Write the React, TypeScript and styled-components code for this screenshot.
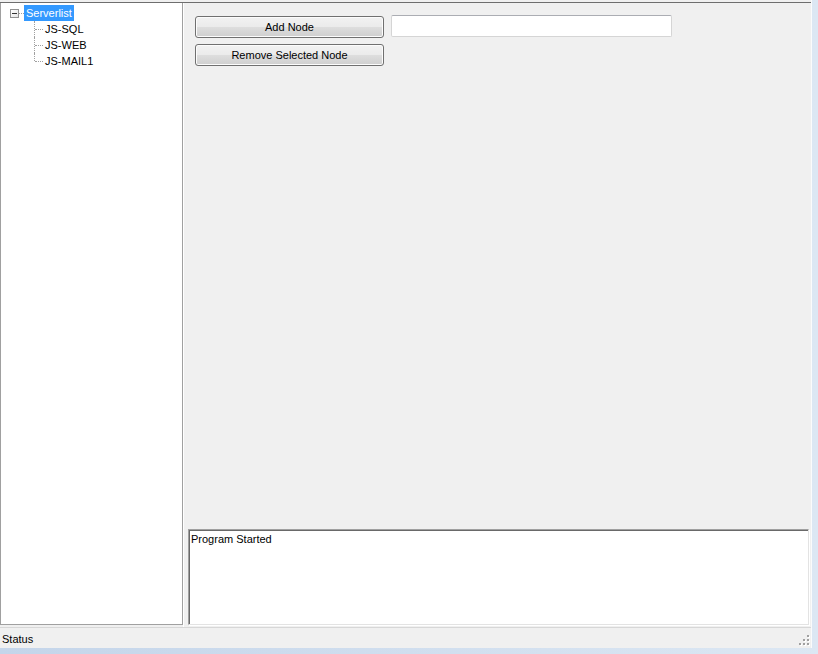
import React from 'react'
import { createGlobalStyle, styled } from 'styled-components'

const GlobalStyle = createGlobalStyle`
  html, body {
    margin: 0;
    padding: 0;
    background: #dce6f2;
  }
  body {
    font-family: "Liberation Sans", Arial, sans-serif;
    font-size: 11px;
    color: #000;
  }
`

const children = ['JS-SQL', 'JS-WEB', 'JS-MAIL1']

const App = () => {
  return (
    <StyledDesktop>
      <GlobalStyle />
      <StyledWindow>
        <StyledSplit>
          <StyledTreePanel>
            <StyledRootRow>
              <StyledExpander />
              <StyledStub />
              <StyledSelectedLabel>Serverlist</StyledSelectedLabel>
            </StyledRootRow>
            {children.map((name, i) => (
              <StyledChildRow key={name}>
                <StyledBranch $last={i === children.length - 1} />
                <StyledLabel>{name}</StyledLabel>
              </StyledChildRow>
            ))}
          </StyledTreePanel>
          <StyledContentPanel>
            <StyledControls>
              <StyledRow>
                <StyledButton>Add Node</StyledButton>
                <StyledTextInput type="text" />
              </StyledRow>
              <StyledRow>
                <StyledButton>Remove Selected Node</StyledButton>
              </StyledRow>
            </StyledControls>
            <StyledLog readOnly value="Program Started" />
          </StyledContentPanel>
        </StyledSplit>
        <StyledStatusBar>
          <StyledStatusText>Status</StyledStatusText>
          <StyledGrip>
            <svg width="12" height="12" viewBox="0 0 12 12">
              {[
                [9, 1],
                [5, 5],
                [9, 5],
                [1, 9],
                [5, 9],
                [9, 9],
              ].map(([x, y]) => (
                <g key={`${x}-${y}`}>
                  <rect x={x + 1} y={y + 1} width="2" height="2" fill="#ffffff" />
                  <rect x={x} y={y} width="2" height="2" fill="#a0a0a0" />
                </g>
              ))}
            </svg>
          </StyledGrip>
        </StyledStatusBar>
      </StyledWindow>
    </StyledDesktop>
  )
}

export default App

const StyledDesktop = styled.div`
  width: 818px;
  height: 654px;
  overflow: hidden;
  background: linear-gradient(90deg, #c4d5ea, #dce7f3);
`

const StyledWindow = styled.div`
  width: 811px;
  height: 648px;
  background: #f0f0f0;
  border-right: 1px solid #fbfbfb;
  display: flex;
  flex-direction: column;
`

const StyledSplit = styled.div`
  flex: 1;
  margin-top: 2px;
  display: flex;
  min-height: 0;
  border-top: 1px solid #6e6e6e;
`

const StyledTreePanel = styled.div`
  width: 181px;
  background: #ffffff;
  border-left: 1px solid #a0a0a0;
  border-right: 1px solid #a0a0a0;
  border-bottom: 1px solid #a0a0a0;
  padding-top: 2px;
  margin-bottom: 2px;
  display: flex;
  flex-direction: column;
`

const StyledRootRow = styled.div`
  height: 16px;
  display: flex;
  align-items: center;
  padding-left: 9px;
`

const StyledExpander = styled.span`
  position: relative;
  width: 7px;
  height: 7px;
  border: 1px solid #919191;
  background: linear-gradient(135deg, #ffffff, #e4e4e4);

  &::after {
    content: '';
    position: absolute;
    left: 1px;
    top: 3px;
    width: 5px;
    height: 1px;
    background: #333333;
  }
`

const StyledStub = styled.span`
  width: 5px;
  border-top: 1px dotted #a0a0a0;
`

const StyledSelectedLabel = styled.span`
  height: 16px;
  line-height: 16px;
  padding: 0 2px;
  background: #3399ff;
  color: #ffffff;
`

const StyledChildRow = styled.div`
  height: 16px;
  display: flex;
  align-items: center;
  padding-left: 33px;
`

const StyledBranch = styled.span<{ $last: boolean }>`
  position: relative;
  align-self: stretch;
  width: 10px;

  &::before {
    content: '';
    position: absolute;
    left: 0;
    top: 0;
    height: ${({ $last }) => ($last ? '8px' : '16px')};
    border-left: 1px dotted #a0a0a0;
  }

  &::after {
    content: '';
    position: absolute;
    left: 1px;
    top: 8px;
    width: 8px;
    border-top: 1px dotted #a0a0a0;
  }
`

const StyledLabel = styled.span`
  line-height: 16px;
  padding: 0 1px;
`

const StyledContentPanel = styled.div`
  flex: 1;
  display: flex;
  flex-direction: column;
  border-left: 1px solid #ffffff;
  padding: 0 2px 2px 4px;
`

const StyledControls = styled.div`
  flex: 1;
  display: flex;
  flex-direction: column;
  gap: 6px;
  padding: 12px 0 0 7px;
`

const StyledRow = styled.div`
  display: flex;
  align-items: center;
  gap: 7px;
`

const StyledButton = styled.button`
  width: 189px;
  height: 22px;
  padding: 0;
  font-family: "Liberation Sans", Arial, sans-serif;
  font-size: 11px;
  color: #000000;
  border: 1px solid #707070;
  border-radius: 3px;
  background: linear-gradient(#f2f2f2 0%, #ebebeb 48%, #dddddd 52%, #cfcfcf 100%);
  box-shadow: inset 0 0 0 1px #fcfcfc;
`

const StyledTextInput = styled.input`
  width: 281px;
  height: 22px;
  box-sizing: border-box;
  margin: 0 0 1px;
  border: 1px solid #d5d5d5;
  border-top-color: #abadb3;
  border-radius: 2px;
  background: #ffffff;
  outline: none;
`

const StyledLog = styled.textarea`
  height: 96px;
  box-sizing: border-box;
  margin: 0;
  resize: none;
  padding: 3px 2px;
  font-family: "Liberation Sans", Arial, sans-serif;
  font-size: 11px;
  color: #000000;
  background: #ffffff;
  border: 1px solid;
  border-color: #a0a0a0 #e3e3e3 #e3e3e3 #a0a0a0;
  box-shadow: inset 1px 1px 0 #696969, 1px 1px 0 #ffffff;
  outline: none;
`

const StyledStatusBar = styled.div`
  height: 21px;
  display: flex;
  align-items: center;
  justify-content: space-between;
  border-top: 1px solid #d7d7d7;
  padding: 1px 0 0 2px;
  box-sizing: border-box;
`

const StyledStatusText = styled.span`
  font-size: 11px;
`

const StyledGrip = styled.span`
  display: flex;
  align-self: flex-end;
  margin-bottom: 2px;
  margin-right: 1px;
`
